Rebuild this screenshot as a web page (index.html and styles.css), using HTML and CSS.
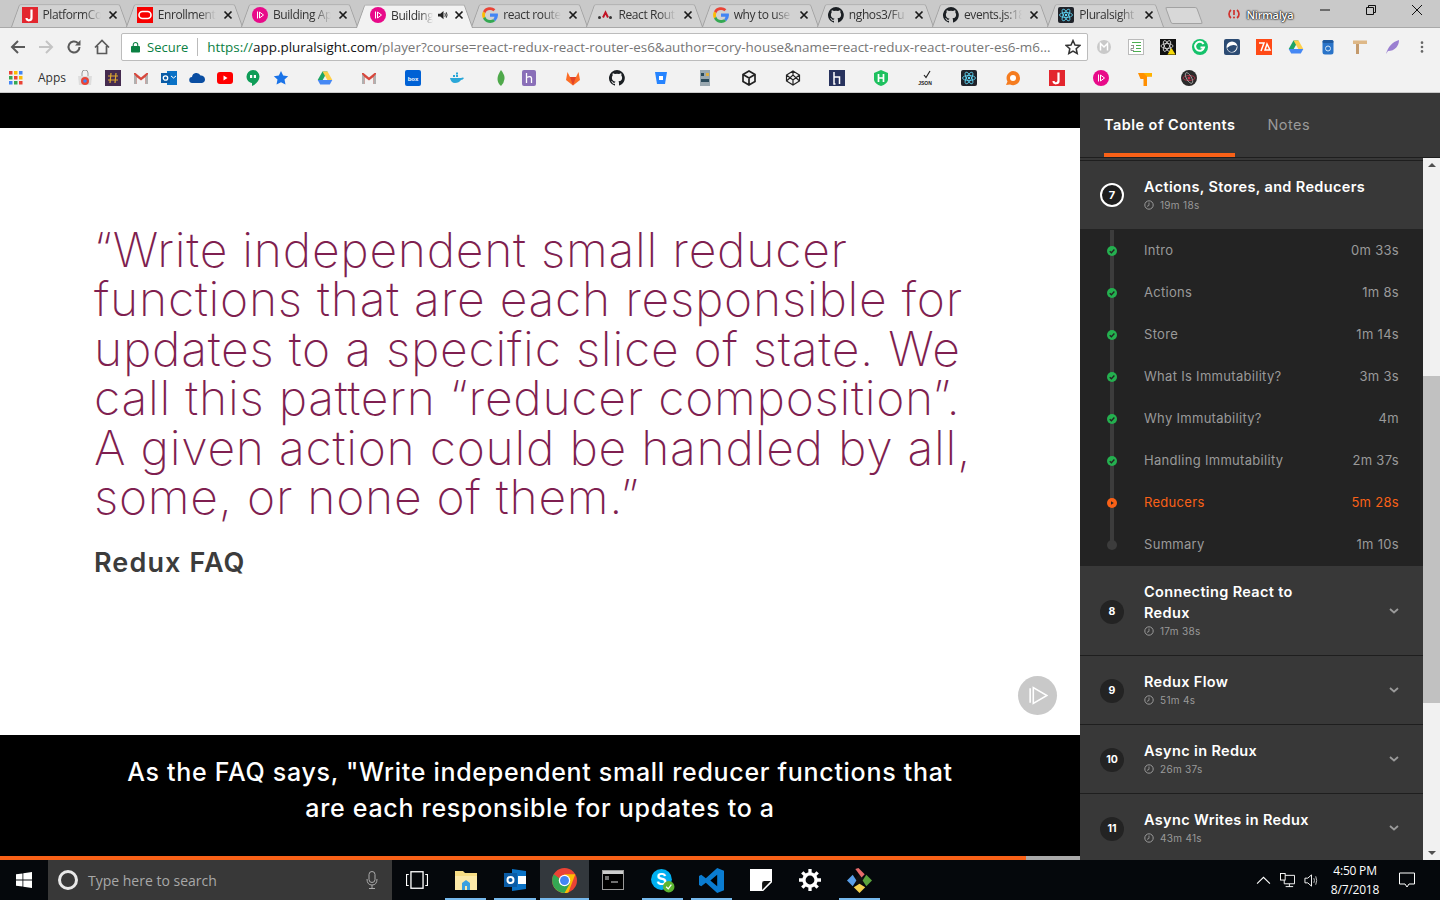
FILE: index.html
```html
<!DOCTYPE html>
<html lang="en">
<head>
  <meta charset="UTF-8">
  <title>Pluralsight</title>
  <link rel="stylesheet" href="styles.css">
</head>
<body>
  <svg class="defs" width="0" height="0">
    <symbol id="ps" viewBox="0 0 16 16"><circle cx="8" cy="8" r="8" fill="#e80a89"/><path d="M5.500 4.500v7M7.500 5v6l4-3z" fill="none" stroke="#fff" stroke-width="1"/></symbol>
    <symbol id="goog" viewBox="0 0 16 16"><path d="M8 3a5 5 0 0 1 3.400 1.300l2-2A8 8 0 0 0 1 4.400l2.300 1.800A5 5 0 0 1 8 3z" fill="#ea4335"/><path d="M3.300 6.200 1 4.400a8 8 0 0 0 0 7.200l2.300-1.800a5 5 0 0 1 0-3.600z" fill="#fbbc05"/><path d="M8 13a5 5 0 0 1-4.700-3.200L1 11.600A8 8 0 0 0 13.400 14l-2.200-1.800A5 5 0 0 1 8 13z" fill="#34a853"/><path d="M15.800 6.600H8v3.200h4.500a4 4 0 0 1-1.300 2.400l2.200 1.800a8 8 0 0 0 2.400-7.400z" fill="#4285f4"/></symbol>
    <symbol id="gh" viewBox="0 0 16 16"><path d="M8 0a8 8 0 0 0-2.500 15.600c.4.100.5-.2.500-.4v-1.400c-2.200.5-2.700-1-2.700-1-.4-.9-.9-1.200-.9-1.200-.7-.5.100-.5.100-.5.800.100 1.200.8 1.200.8.700 1.200 1.900.9 2.300.7.100-.5.300-.9.500-1.100-1.800-.2-3.600-.9-3.600-4 0-.9.300-1.600.8-2.100-.1-.2-.4-1 .1-2.100 0 0 .7-.2 2.200.8a7.600 7.600 0 0 1 4 0c1.500-1 2.200-.8 2.200-.8.400 1.100.2 1.900.1 2.100.5.600.8 1.300.8 2.100 0 3.100-1.900 3.700-3.700 3.900.3.300.6.800.6 1.500v2.200c0 .2.100.5.600.4A8 8 0 0 0 8 0z" fill="#1b1f23"/></symbol>
    <symbol id="react" viewBox="0 0 16 16"><rect width="16" height="16" rx="2" fill="#20232a"/><g fill="none" stroke="#61dafb" stroke-width=".8"><ellipse cx="8" cy="8" rx="6.500" ry="2.500"/><ellipse cx="8" cy="8" rx="6.500" ry="2.500" transform="rotate(60 8 8)"/><ellipse cx="8" cy="8" rx="6.500" ry="2.500" transform="rotate(120 8 8)"/></g><circle cx="8" cy="8" r="1.200" fill="#61dafb"/></symbol>
    <symbol id="jira" viewBox="0 0 16 16"><rect width="16" height="16" fill="#e3262e"/><path d="M9.500 2.500v8a2.500 2.500 0 0 1-5 .5" fill="none" stroke="#fff" stroke-width="2.200"/></symbol>
    <symbol id="gmail" viewBox="0 0 16 16"><path d="M1 3v11h2.500V7L8 10.500 12.500 7v7H15V3h-1.500L8 7.500 2.500 3z" fill="#d8473c"/><path d="M3.500 14V7L1 4v10zM12.500 14V7L15 4v10z" fill="#b0b0b0"/></symbol>
    <symbol id="drive" viewBox="0 0 16 16"><path d="M5.500 1.500h5L5.700 10H.7z" fill="#1fa463"/><path d="M10.500 1.500 15.300 10h-5L5.500 1.500z" fill="#ffd04b"/><path d="M.7 10h14.600l-2.500 4.500H3.200z" fill="#4688f4"/></symbol>
    <symbol id="close" viewBox="0 0 10 10"><path d="M1.500 1.500l7 7M8.500 1.500l-7 7" stroke="#1a1a1a" stroke-width="1.700"/></symbol>
    <symbol id="check" viewBox="0 0 10 10"><circle cx="5" cy="5" r="5" fill="#24b04f"/><path d="M2.700 5.200l1.700 1.600 3-3.300" fill="none" stroke="#232323" stroke-width="1.300"/></symbol>
    <symbol id="clock" viewBox="0 0 10 10"><circle cx="5" cy="5" r="4.200" fill="none" stroke="#9a9a9a" stroke-width="1"/><path d="M5 2.500V5.400L3 6.400" fill="none" stroke="#9a9a9a" stroke-width=".9"/></symbol>
    <symbol id="chev" viewBox="0 0 10 6"><path d="M1 1l4 3.500L9 1" fill="none" stroke="#9a9a9a" stroke-width="1.800"/></symbol>
  </svg>

  <header class="browser">
    <div class="tabstrip">
      <div class="tab"><svg class="fav"><use href="#jira"/></svg><span class="tab-title">PlatformCo</span><svg class="tab-x"><use href="#close"/></svg></div>
      <div class="tab"><svg class="fav" viewBox="0 0 16 16"><rect width="16" height="16" fill="#f80000"/><rect x="2" y="4.500" width="12" height="7" rx="3.500" fill="none" stroke="#fff" stroke-width="1.600"/></svg><span class="tab-title">Enrollment</span><svg class="tab-x"><use href="#close"/></svg></div>
      <div class="tab"><svg class="fav"><use href="#ps"/></svg><span class="tab-title">Building Ap</span><svg class="tab-x"><use href="#close"/></svg></div>
      <div class="tab active"><svg class="fav"><use href="#ps"/></svg><span class="tab-title short">Building</span><svg class="tab-sound" viewBox="0 0 12 10"><path d="M0 3.500h2.500L6 .5v9L2.500 6.500H0z" fill="#222"/><path d="M7.500 3q1 2 0 4M9 2q1.800 3 0 6" fill="none" stroke="#222"/></svg><svg class="tab-x"><use href="#close"/></svg></div>
      <div class="tab"><svg class="fav"><use href="#goog"/></svg><span class="tab-title">react route</span><svg class="tab-x"><use href="#close"/></svg></div>
      <div class="tab"><svg class="fav" viewBox="0 0 16 16"><circle cx="2.500" cy="10.500" r="1.500" fill="#333"/><path d="M6 10.500l2.500-5 2.500 5" fill="none" stroke="#c21325" stroke-width="2"/><circle cx="13.500" cy="10.500" r="1.500" fill="#333"/></svg><span class="tab-title">React Rout</span><svg class="tab-x"><use href="#close"/></svg></div>
      <div class="tab"><svg class="fav"><use href="#goog"/></svg><span class="tab-title">why to use</span><svg class="tab-x"><use href="#close"/></svg></div>
      <div class="tab"><svg class="fav"><use href="#gh"/></svg><span class="tab-title">nghos3/Fu</span><svg class="tab-x"><use href="#close"/></svg></div>
      <div class="tab"><svg class="fav"><use href="#gh"/></svg><span class="tab-title">events.js:18</span><svg class="tab-x"><use href="#close"/></svg></div>
      <div class="tab"><svg class="fav"><use href="#react"/></svg><span class="tab-title">Pluralsight</span><svg class="tab-x"><use href="#close"/></svg></div>
      <div class="newtab"></div>
      <div class="profile">
        <svg class="profile-ico" viewBox="0 0 12 12"><path d="M3 2a5 5 0 0 0 0 8M9 2a5 5 0 0 1 0 8" fill="none" stroke="#d0312d" stroke-width="1.700"/><path d="M6 2v5" stroke="#d0312d" stroke-width="1.700"/><circle cx="6" cy="9.500" r="1" fill="#d0312d"/></svg>
        <span class="profile-name">Nirmalya</span>
      </div>
      <div class="winbtns">
        <svg class="winbtn" viewBox="0 0 10 10"><path d="M0 5h10" stroke="#111"/></svg>
        <svg class="winbtn" viewBox="0 0 10 10"><path d="M.5 2.500h7v7h-7zM2.500 2.500v-2h7v7h-2" fill="none" stroke="#111"/></svg>
        <svg class="winbtn" viewBox="0 0 10 10"><path d="M0 0l10 10M10 0L0 10" stroke="#111"/></svg>
      </div>
    </div>

    <div class="toolbar">
      <div class="nav">
        <svg class="nav-btn" viewBox="0 0 16 16"><path d="M15 8H2M8 2L2 8l6 6" fill="none" stroke="#5a5a5a" stroke-width="2"/></svg>
        <svg class="nav-btn" viewBox="0 0 16 16"><path d="M1 8h13M8 2l6 6-6 6" fill="none" stroke="#c4c4c4" stroke-width="2"/></svg>
        <svg class="nav-btn" viewBox="0 0 16 16"><path d="M13.500 8a5.500 5.500 0 1 1-1.700-4" fill="none" stroke="#5a5a5a" stroke-width="2"/><path d="M14.500 1v5.500H9z" fill="#5a5a5a"/></svg>
        <svg class="nav-btn" viewBox="0 0 16 16"><path d="M1 8.500L8 1.500l7 7M3.500 7v7.500h9V7" fill="none" stroke="#5a5a5a" stroke-width="1.700"/></svg>
      </div>
      <div class="omnibox">
        <svg class="lock" viewBox="0 0 10 12"><path d="M2.500 5V3.500a2.500 2.500 0 0 1 5 0V5" fill="none" stroke="#0b8043" stroke-width="1.200"/><rect y="5" width="10" height="7" rx="1" fill="#0b8043"/></svg>
        <span class="secure">Secure</span>
        <span class="url"><span class="url-https">https://</span><span class="url-host">app.pluralsight.com</span>/player?course=react-redux-react-router-es6&amp;author=cory-house&amp;name=react-redux-react-router-es6-m6...</span>
        <svg class="star" viewBox="0 0 16 16"><path d="M8 1.500l2 4.500 4.800.5-3.600 3.200 1 4.800L8 12l-4.200 2.500 1-4.800L1.200 6.500 6 6z" fill="none" stroke="#333" stroke-width="1.500"/></svg>
      </div>
      <div class="exts">
        <svg class="ext" viewBox="0 0 16 16"><circle cx="8" cy="8" r="7" fill="#c9c9c9"/><path d="M4.500 11.500v-7L8 8l3.500-3.500v7" fill="none" stroke="#fff" stroke-width="1.500"/></svg>
        <svg class="ext" viewBox="0 0 16 16"><rect x=".5" y=".5" width="15" height="15" fill="#fff" stroke="#bbb"/><path d="M4 3.500h9M8 6.500h5M8 9.500h5M5 12.500h8" stroke="#4caf50"/><path d="M3 6.500h3M5.500 6.500v3H3v2h3" fill="none" stroke="#777" stroke-width=".8"/></svg>
        <svg class="ext" viewBox="0 0 16 16"><rect width="16" height="16" fill="#111"/><g fill="none" stroke="#ddd" stroke-width=".8"><ellipse cx="7" cy="7" rx="6" ry="2.500"/><ellipse cx="7" cy="7" rx="6" ry="2.500" transform="rotate(60 7 7)"/><ellipse cx="7" cy="7" rx="6" ry="2.500" transform="rotate(120 7 7)"/></g><path d="M11.500 9l4 6.500h-8z" fill="#f5d90a"/></svg>
        <svg class="ext" viewBox="0 0 16 16"><circle cx="8" cy="8" r="8" fill="#15c26b"/><path d="M11.500 5a4.500 4.500 0 1 0 .5 3.500H8.500" fill="none" stroke="#fff" stroke-width="2"/></svg>
        <svg class="ext" viewBox="0 0 16 16"><rect width="16" height="16" rx="2" fill="#2c4b73"/><circle cx="8" cy="8" r="5.500" fill="#fff"/><path d="M3 9q5-5 10-2-1 6-6 6-3-1-4-4z" fill="#2c4b73"/></svg>
        <svg class="ext" viewBox="0 0 16 16"><rect width="16" height="16" fill="#ff4a16"/><path d="M3 4h5L5 12M11 5l-2 6h5z" fill="none" stroke="#fff" stroke-width="1.500"/></svg>
        <svg class="ext"><use href="#drive"/></svg>
        <svg class="ext" viewBox="0 0 16 16"><rect x="2.500" y="1" width="11" height="14.500" rx="2.500" fill="#2a74c9"/><rect x="2.500" y="1" width="11" height="3" rx="1.500" fill="#1f5aa0"/><circle cx="8" cy="9.500" r="2.500" fill="none" stroke="#cfe3f7"/></svg>
        <svg class="ext" viewBox="0 0 16 16"><path d="M4 3h3v12H4z" fill="#c49a6c"/><path d="M1 1.500h14v3.500H1z" fill="#deb887"/></svg>
        <svg class="ext" viewBox="0 0 16 16"><path d="M2 15C4 8 8 3 15 1c0 6-4 11-11 11z" fill="#9a7fd1"/></svg>
        <svg class="ext-menu" viewBox="0 0 4 16"><circle cx="2" cy="3" r="1.500" fill="#666"/><circle cx="2" cy="8" r="1.500" fill="#666"/><circle cx="2" cy="13" r="1.500" fill="#666"/></svg>
      </div>
    </div>

    <div class="bookmarks">
      <svg class="bm" viewBox="0 0 16 16"><g fill="#ea4335"><rect x="1" y="1" width="3.500" height="3.500"/></g><rect x="6" y="1" width="3.500" height="3.500" fill="#fbbc05"/><rect x="11" y="1" width="3.500" height="3.500" fill="#4285f4"/><rect x="1" y="6" width="3.500" height="3.500" fill="#34a853"/><rect x="6" y="6" width="3.500" height="3.500" fill="#ea4335"/><rect x="11" y="6" width="3.500" height="3.500" fill="#fbbc05"/><rect x="1" y="11" width="3.500" height="3.500" fill="#4285f4"/><rect x="6" y="11" width="3.500" height="3.500" fill="#34a853"/><rect x="11" y="11" width="3.500" height="3.500" fill="#ea4335"/></svg>
      <span class="apps">Apps</span>
      <svg class="bm" viewBox="0 0 16 16"><path d="M1 6h14l-1 9H2z" fill="#ddd"/><circle cx="8" cy="11" r="4" fill="#ea4335"/><circle cx="8" cy="11" r="1.800" fill="#4285f4"/><path d="M5 6V3a3 3 0 0 1 6 0v3" fill="none" stroke="#999"/></svg>
      <svg class="bm" viewBox="0 0 16 16"><rect width="16" height="16" fill="#452b4f"/><path d="M6 3L5 13M11 3l-1 10M3 6h10M3 10h10" stroke="#e0a92f" stroke-width="1.200"/></svg>
      <svg class="bm"><use href="#gmail"/></svg>
      <svg class="bm" viewBox="0 0 16 16"><rect x="6" y="1" width="10" height="14" fill="#0a72c6"/><rect y="3" width="9" height="10" fill="#0a5ba5"/><circle cx="4.500" cy="8" r="2.200" fill="none" stroke="#fff" stroke-width="1.300"/><path d="M10 6l2.500 2L15 6" fill="none" stroke="#fff"/></svg>
      <svg class="bm" viewBox="0 0 16 16"><path d="M3.500 13a3 3 0 0 1-.5-6 4.500 4.500 0 0 1 8.500-1.500A4 4 0 0 1 16 9.500 3.500 3.500 0 0 1 13 13z" fill="#0a4ea2"/></svg>
      <svg class="bm" viewBox="0 0 16 16"><rect y="2" width="16" height="12" rx="3" fill="#f00"/><path d="M6.500 5.500v5l4-2.500z" fill="#fff"/></svg>
      <svg class="bm" viewBox="0 0 16 16"><path d="M8 0a6.500 6.500 0 0 0-6.500 6.500C1.500 10 4 12.500 7 13v3c4-2 7.500-5 7.500-9.500A6.500 6.500 0 0 0 8 0z" fill="#0f9d58"/><path d="M5 5h2.200v3H5zM8.800 5H11v3H8.800z" fill="#fff"/></svg>
      <svg class="bm" viewBox="0 0 16 16"><path d="M8 1l2.200 4.600 5 .6-3.700 3.400 1 5L8 12.200l-4.500 2.400 1-5L.8 6.200l5-.6z" fill="#1a73e8"/></svg>
      <svg class="bm wide"><use href="#drive"/></svg>
      <svg class="bm wide"><use href="#gmail"/></svg>
      <svg class="bm wide" viewBox="0 0 16 16"><rect width="16" height="16" rx="2" fill="#0061d5"/><text class="bm-text" x="8" y="11">box</text></svg>
      <svg class="bm wide" viewBox="0 0 16 16"><path d="M1 8h11q2-1 3 0-1 2-3 2-2 3-6 3-4 0-5-5z" fill="#2aa7d8"/><path d="M4 5h2v2H4zM7 5h2v2H7zM7 2.500h2v2H7z" fill="#2aa7d8"/></svg>
      <svg class="bm wide" viewBox="0 0 16 16"><path d="M8 0q4 5 3.500 9T8 16Q4.500 13 4.500 9T8 0z" fill="#4fa94b"/></svg>
      <svg class="bm" viewBox="0 0 16 16"><rect x="1" width="14" height="16" rx="2" fill="#8a6fb8"/><path d="M5.500 3v10M10.500 8v5M5.500 7.500q5-2 5 1" fill="none" stroke="#fff" stroke-width="1.300"/></svg>
      <svg class="bm wide" viewBox="0 0 16 16"><path d="M8 15.500L1 10l1.500-8L5 7h6l2.500-5L15 10z" fill="#fc6d26"/><path d="M8 15.500L5 7h6z" fill="#e24329"/></svg>
      <svg class="bm wide"><use href="#gh"/></svg>
      <svg class="bm wide" viewBox="0 0 16 16"><path d="M2 2h12l-2 12H4z" fill="#2684ff"/><rect x="6" y="6" width="4" height="4" fill="#fff"/></svg>
      <svg class="bm wide" viewBox="0 0 16 16"><rect x="3" width="10" height="16" fill="#9aa8b0"/><rect x="4" y="3" width="3" height="3" fill="#2b4a5a"/><rect x="9" y="3" width="3" height="3" fill="#e0b040"/><rect x="4" y="9" width="8" height="3" fill="#2b4a5a"/></svg>
      <svg class="bm wide" viewBox="0 0 16 16"><path d="M8 1l6 3.500v7L8 15l-6-3.500v-7zM2 4.500L8 8l6-3.500M8 8v7" fill="none" stroke="#222" stroke-width="1.700"/></svg>
      <svg class="bm wide" viewBox="0 0 16 16"><path d="M8 1l6.500 4v6L8 15l-6.500-4V5zM1.500 5L8 10l6.500-5M8 1v4M8 10v5M1.500 11L8 5l6.500 6" fill="none" stroke="#222" stroke-width="1.200"/></svg>
      <svg class="bm wide" viewBox="0 0 16 16"><rect width="16" height="16" fill="#28335e"/><path d="M5 2v12h1.500M5 7h5.500v7" fill="none" stroke="#fff" stroke-width="1.500"/></svg>
      <svg class="bm wide" viewBox="0 0 16 16"><path d="M8 0l7 3v7q-1 4-7 6-6-2-7-6V3z" fill="#1ec15f"/><path d="M5.500 4v8M10.500 4v8M5.500 8h5" stroke="#fff" stroke-width="1.700"/></svg>
      <svg class="bm wide" viewBox="0 0 16 16"><path d="M7 5l2 2.500L13 1" fill="none" stroke="#222" stroke-width="1.200"/><text class="bm-json" x="8" y="15">JSON</text></svg>
      <svg class="bm wide"><use href="#react"/></svg>
      <svg class="bm wide" viewBox="0 0 16 16"><path d="M8 1a7 7 0 0 1 7 7 7 7 0 0 1-10 6.500L1 15l1.500-3.500A7 7 0 0 1 8 1z" fill="#f57c20"/><circle cx="8" cy="8" r="3" fill="#fff"/></svg>
      <svg class="bm wide"><use href="#jira"/></svg>
      <svg class="bm wide"><use href="#ps"/></svg>
      <svg class="bm wide" viewBox="0 0 16 16"><path d="M1 3h14v3.500H10V16H6.500V9H3.500z" fill="#ff8f00"/><path d="M6.500 3H15v3.500H10z" fill="#ffb300"/></svg>
      <svg class="bm wide" viewBox="0 0 16 16"><circle cx="8" cy="8" r="8" fill="#2b2b2b"/><circle cx="8" cy="8" r="1.500" fill="#c2344a"/><ellipse cx="8" cy="8" rx="6" ry="2.500" fill="none" stroke="#c2344a" stroke-width=".8"/><ellipse cx="8" cy="8" rx="6" ry="2.500" fill="none" stroke="#aaa" stroke-width=".8" transform="rotate(60 8 8)"/></svg>
    </div>
  </header>

  <main class="app">
    <section class="player">
      <div class="player-top"></div>
      <div class="slide">
        <blockquote class="quote">“Write independent small reducer<br>functions that are each responsible for<br>updates to a specific slice of state. We<br>call this pattern “reducer composition”.<br>A given action could be handled by all,<br>some, or none of them.”</blockquote>
        <div class="quote-src">Redux FAQ</div>
        <div class="slide-play"><svg viewBox="0 0 20 20"><path d="M3 3v14M6 2.500v15L19 10z" fill="none" stroke="#fff" stroke-width="1.500"/></svg></div>
      </div>
      <div class="caption">As the FAQ says, "Write independent small reducer functions that<br>are each responsible for updates to a</div>
      <div class="progress"><div class="progress-fill"></div></div>
    </section>

    <aside class="sidebar">
      <nav class="side-tabs">
        <a class="side-tab current">Table of Contents</a>
        <a class="side-tab">Notes</a>
      </nav>
      <div class="side-body">
        <div class="toc">
          <div class="module open">
            <div class="num num-ring">7</div>
            <div class="module-info">
              <div class="module-title">Actions, Stores, and Reducers</div>
              <div class="module-time"><svg class="clock"><use href="#clock"/></svg>19m 18s</div>
            </div>
          </div>
          <ul class="clips">
            <li class="clip"><svg class="dot"><use href="#check"/></svg><span class="clip-name">Intro</span><span>0m 33s</span></li>
            <li class="clip"><svg class="dot"><use href="#check"/></svg><span class="clip-name">Actions</span><span>1m 8s</span></li>
            <li class="clip"><svg class="dot"><use href="#check"/></svg><span class="clip-name">Store</span><span>1m 14s</span></li>
            <li class="clip"><svg class="dot"><use href="#check"/></svg><span class="clip-name">What Is Immutability?</span><span>3m 3s</span></li>
            <li class="clip"><svg class="dot"><use href="#check"/></svg><span class="clip-name">Why Immutability?</span><span>4m</span></li>
            <li class="clip"><svg class="dot"><use href="#check"/></svg><span class="clip-name">Handling Immutability</span><span>2m 37s</span></li>
            <li class="clip playing"><svg class="dot" viewBox="0 0 10 10"><circle cx="5" cy="5" r="5" fill="#f96117"/><path d="M4 3.200v3.600L6.800 5z" fill="#232323"/></svg><span class="clip-name">Reducers</span><span>5m 28s</span></li>
            <li class="clip last"><svg class="dot" viewBox="0 0 10 10"><circle cx="5" cy="5" r="5" fill="#3c3c3c"/></svg><span class="clip-name">Summary</span><span>1m 10s</span></li>
          </ul>
          <div class="module">
            <div class="num">8</div>
            <div class="module-info">
              <div class="module-title">Connecting React to<br>Redux</div>
              <div class="module-time"><svg class="clock"><use href="#clock"/></svg>17m 38s</div>
            </div>
            <svg class="chev"><use href="#chev"/></svg>
          </div>
          <div class="module">
            <div class="num">9</div>
            <div class="module-info">
              <div class="module-title">Redux Flow</div>
              <div class="module-time"><svg class="clock"><use href="#clock"/></svg>51m 4s</div>
            </div>
            <svg class="chev"><use href="#chev"/></svg>
          </div>
          <div class="module">
            <div class="num">10</div>
            <div class="module-info">
              <div class="module-title">Async in Redux</div>
              <div class="module-time"><svg class="clock"><use href="#clock"/></svg>26m 37s</div>
            </div>
            <svg class="chev"><use href="#chev"/></svg>
          </div>
          <div class="module">
            <div class="num">11</div>
            <div class="module-info">
              <div class="module-title">Async Writes in Redux</div>
              <div class="module-time"><svg class="clock"><use href="#clock"/></svg>43m 41s</div>
            </div>
            <svg class="chev"><use href="#chev"/></svg>
          </div>
        </div>
        <div class="scrollbar">
          <div class="scroll-arrow up"></div>
          <div class="scroll-track"><div class="scroll-thumb"></div></div>
          <div class="scroll-arrow down"></div>
        </div>
      </div>
    </aside>
  </main>

  <footer class="taskbar">
    <div class="start"><svg viewBox="0 0 16 16"><path d="M0 2.300l6.500-.9v6.200H0zM7.300 1.300L16 0v7.600H7.300zM0 8.400h6.500v6.200L0 13.700zM7.300 8.400H16V16l-8.700-1.200z" fill="#fff"/></svg></div>
    <div class="search">
      <span class="cortana"></span>
      <span class="search-text">Type here to search</span>
      <svg class="mic" viewBox="0 0 12 18"><rect x="3" y=".5" width="6" height="11" rx="3" fill="none" stroke="#aaa"/><path d="M1 8q0 6 5 6t5-6M6 14v3M3 17.500h6" fill="none" stroke="#aaa"/></svg>
    </div>
    <div class="task"><svg viewBox="0 0 20 16"><rect x="4.500" y=".5" width="11" height="15" fill="none" stroke="#fff" stroke-width="1.200"/><path d="M2.500 3H.5v10h2M17.500 3h2v10h-2" fill="none" stroke="#fff"/></svg></div>
    <div class="task on"><svg viewBox="0 0 22 20"><path d="M0 1h8l2 2h12v17H0z" fill="#f7dd84"/><path d="M0 6h22v14H0z" fill="#fce9a8"/><path d="M7 20v-7l4-3 4 3v7h-3v-4h-2v4z" fill="#3aa0e0"/></svg></div>
    <div class="task on"><svg viewBox="0 0 22 22"><path d="M8 0l14 2v18L8 22z" fill="#0a72c6"/><path d="M0 4h13v14H0z" fill="#0a5ba5"/><circle cx="6.500" cy="11" r="3" fill="none" stroke="#fff" stroke-width="2"/><rect x="14" y="7" width="8" height="8" fill="#fff"/></svg></div>
    <div class="task on current big"><svg viewBox="0 0 24 24"><circle cx="12" cy="12" r="12" fill="#ea4335"/><path d="M12 12L1.700 18a12 12 0 0 0 14 5.400L22.400 6H12z" fill="#fbbc05"/><path d="M1.700 6A12 12 0 0 0 12 24l5.500-9.500H12L6 9z" fill="#34a853"/><circle cx="12" cy="12" r="5.500" fill="#fff"/><circle cx="12" cy="12" r="4.300" fill="#4285f4"/></svg></div>
    <div class="task"><svg viewBox="0 0 22 20"><rect x=".5" y=".5" width="21" height="19" fill="#000" stroke="#999"/><rect x="1" y="1" width="20" height="3" fill="#ccc"/><path d="M3 7h4M3 9h4M9 12h7" stroke="#ddd"/></svg></div>
    <div class="task on big"><svg viewBox="0 0 24 24"><circle cx="11" cy="11" r="10" fill="#00aff0"/><text class="skype-s" x="11" y="16">S</text><circle cx="18" cy="18" r="5.500" fill="#5cb531"/><path d="M15.500 18l2 2 3-4" fill="none" stroke="#fff" stroke-width="1.200"/></svg></div>
    <div class="task on big"><svg viewBox="0 0 22 22"><path d="M16 0l6 2.500v17L16 22 6 13 2 16 0 15V7l2-1 4 3z" fill="#0a7cd1"/><path d="M16 6l-6 5 6 5z" fill="#000"/></svg></div>
    <div class="task"><svg viewBox="0 0 20 20"><path d="M0 0h20v12l-8 8H0z" fill="#fff"/><path d="M11 19v-6q0-2 2-2h6z" fill="#111"/></svg></div>
    <div class="task"><svg viewBox="0 0 20 20"><circle cx="10" cy="10" r="5.500" fill="none" stroke="#fff" stroke-width="3"/><path d="M10 0v4M10 16v4M0 10h4M16 10h4M3 3l2.800 2.800M14.200 14.200L17 17M17 3l-2.800 2.800M5.800 14.200L3 17" stroke="#fff" stroke-width="3"/></svg></div>
    <div class="task on big"><svg viewBox="0 0 24 24"><path d="M12 6l6 6-6 6-6-6z" fill="#111"/><path d="M5.500 6.500L0 12l5.500 5.500L9 12z" fill="#5a9ee8"/><path d="M18.500 6.500L24 12l-5.500 5.500L15 12z" fill="#5ba33c"/><path d="M6.500 18.500L12 24l5.500-5.500L12 15z" fill="#f2d04f"/><path d="M8 1l3-1 6 6-3 3z" fill="#e56b6b"/></svg></div>
    <div class="tray">
      <svg class="tray-ico" viewBox="0 0 14 8"><path d="M1 7l6-6 6 6" fill="none" stroke="#fff"/></svg>
      <svg class="tray-ico" viewBox="0 0 16 16"><path d="M4.500 2.500h11v9h-11zM10 11.500v3M6 14.500h8" fill="none" stroke="#fff"/><rect x=".5" y=".5" width="5" height="7" fill="#000" stroke="#fff"/></svg>
      <svg class="tray-ico" viewBox="0 0 16 16"><path d="M1 5.500h3L8 2v12L4 10.500H1z" fill="none" stroke="#fff"/><path d="M10.500 5.500q1.200 2.500 0 5M12.500 3.500q2 4.500 0 9" fill="none" stroke="#ccc"/></svg>
      <div class="clock-box">4:50 PM<br>8/7/2018</div>
      <svg class="notify" viewBox="0 0 16 16"><path d="M.5 1h15v11H10l-2 3-2-3H.5z" fill="none" stroke="#fff"/></svg>
    </div>
  </footer>
</body>
</html>
```

FILE: styles.css
```css
* { box-sizing: border-box; }
html, body { margin: 0; height: 900px; overflow: hidden; }
body { font-family: Inter, "Open Sans", sans-serif; background: #000; }
.defs { position: absolute; }
svg { display: block; flex: none; }

/* browser chrome */
.browser { height: 93px; background: #f2f2f2; font-family: "Open Sans", sans-serif; }
.tabstrip { height: 28px; display: flex; align-items: stretch; background: #c9c9c9; padding-left: 10.500px; border-bottom: 1px solid #a9a9a9; }
.tab { position: relative; width: 115.200px; display: flex; align-items: center; padding: 2px 0 0 11px; z-index: 1; }
.tab::before { content: ""; position: absolute; top: 0; bottom: 0; left: 0; width: 115px; background: #d2d2d2; border: 1px solid #a2a2a2; border-bottom: 0; border-radius: 2px 2px 0 0; transform: perspective(40px) rotateX(14deg); transform-origin: bottom; z-index: -1; }
.tab.active::before { background: #f2f2f2; }
.tab.active { z-index: 2; margin-bottom: -1px; padding-left: 14px; }
.fav { width: 16px; height: 16px; margin-right: 5px; }
.tab-title { width: 58px; margin-right: 4px; font-size: 12px; letter-spacing: -.4px; color: #333; white-space: nowrap; overflow: hidden; -webkit-mask-image: linear-gradient(90deg, #000 70%, transparent); mask-image: linear-gradient(90deg, #000 70%, transparent); }
.tab-title.short { width: 42px; margin-right: 0; }
.tab-sound { width: 11px; height: 10px; margin: 0 2px 0 5px; }
.tab-x { width: 10px; height: 10px; margin-left: 3px; }
.newtab { width: 32px; height: 17px; margin: 7px 0 0 6px; background: #d8d8d8; border: 1px solid #a2a2a2; border-radius: 2px; transform: skewX(20deg); }
.profile { display: flex; align-items: center; margin-left: 28px; height: 28px; }
.profile-ico { width: 12px; height: 12px; margin-right: 6px; }
.profile-name { font-size: 11px; font-weight: 600; letter-spacing: -.2px; color: #fff; text-shadow: 0 0 2px #111, 0 0 2px #111, 0 0 1px #111; }
.winbtns { display: flex; margin-left: auto; align-items: center; gap: 36px; padding: 0 18px 8px 0; }
.winbtn { width: 10px; height: 10px; }

.toolbar { height: 35px; display: flex; align-items: center; padding-top: 2px; }
.nav { width: 121px; display: flex; align-items: center; gap: 12px; padding-left: 10px; }
.nav-btn { width: 16px; height: 16px; }
.omnibox { width: 967px; height: 28px; display: flex; align-items: center; background: #fff; border: 1px solid #bcbcbc; border-radius: 2px; padding: 0 6px 0 9px; font-size: 13.500px; white-space: nowrap; }
.lock { width: 9px; height: 12px; margin-right: 7px; }
.secure { color: #0b8043; padding-right: 9px; margin-right: 9px; border-right: 1px solid #bbb; line-height: 18px; font-size: 13px; }
.url { flex: 1; color: #767676; overflow: hidden; font-size: 13.430px; }
.url-https { color: #0b8043; }
.url-host { color: #111; }
.star { width: 16px; height: 16px; }
.exts { display: flex; align-items: center; gap: 16px; padding-left: 8px; }
.ext { width: 16px; height: 16px; }
.ext-menu { width: 4px; height: 14px; margin-left: 4px; }

.bookmarks { height: 30px; display: flex; align-items: center; gap: 12px; padding: 0 0 0 8px; border-bottom: 1px solid #c9c9c9; }
.bm { width: 16px; height: 16px; }
.bm.wide { margin-left: 16px; }
.apps { font-size: 12px; color: #333; margin: 0 0 0 2px; width: 27px; }
.bm-text { font: bold 6px "Liberation Sans", sans-serif; fill: #fff; text-anchor: middle; }
.bm-json { font: bold 5px "Liberation Sans", sans-serif; fill: #222; text-anchor: middle; }
.skype-s { font: bold 15px "Liberation Sans", sans-serif; fill: #fff; text-anchor: middle; }

/* player */
.app { height: 767px; display: flex; }
.player { width: 1080px; display: flex; flex-direction: column; background: #000; }
.player-top { height: 35px; }
.slide { position: relative; height: 607px; background: #fff; padding: 97px 0 0 94px; }
.quote { margin: 0; font-size: 48px; line-height: 49.400px; font-weight: 200; color: #7f1f50; letter-spacing: .75px; white-space: nowrap; }
.quote-src { margin-top: 25px; font-size: 27px; line-height: 34px; font-weight: 600; color: #3c3c3c; letter-spacing: 1.100px; }
.slide-play { position: absolute; left: 1018px; top: 548px; width: 39px; height: 39px; padding: 9px; border-radius: 50%; background: #c9c9c9; }
.caption { height: 121px; padding-top: 19px; color: #fff; font-size: 25px; line-height: 36px; font-weight: 500; text-align: center; letter-spacing: .7px; }
.progress { height: 4px; background: #a9a9a9; }
.progress-fill { width: 1026px; height: 4px; background: #f96117; }

/* table of contents */
.sidebar { width: 360px; display: flex; flex-direction: column; background: #383838; }
.side-tabs { height: 65px; display: flex; gap: 32px; padding-left: 24px; border-bottom: 1px solid #1e1e1e; flex: none; }
.side-tab { height: 64px; line-height: 63px; font-size: 14.500px; letter-spacing: .45px; color: #9a9a9a; }
.side-tab.current { color: #fff; font-weight: 600; border-bottom: 4px solid #f96117; }
.side-body { flex: 1; display: flex; min-height: 0; }
.toc { width: 343px; padding-top: 2px; background: #383838; overflow: hidden; }
.module { display: flex; align-items: center; padding: 15px 24px 17px 20px; border-bottom: 1px solid #1e1e1e; }
.module.open { height: 70px; padding: 0 24px 2px 20px; border-top: 1px solid #1e1e1e; border-bottom: 1px solid #232323; }
.num { width: 24px; height: 24px; margin-top: 4px; border-radius: 50%; background: #232323; color: #fff; font-size: 10.500px; font-weight: 700; text-align: center; line-height: 24px; flex: none; }
.num-ring { margin-top: 2px; background: #1e1e1e; border: 2px solid #fff; line-height: 20px; font-size: 11px; }
.module-info { flex: 1; margin-left: 20px; }
.module-title { color: #fff; font-size: 14.500px; line-height: 21px; font-weight: 600; letter-spacing: .35px; }
.module-time { display: flex; align-items: center; margin-top: 1px; color: #9a9a9a; font-size: 10px; letter-spacing: .3px; line-height: 14px; }
.clock { width: 10px; height: 10px; margin-right: 6px; }
.chev { width: 10px; height: 6px; margin-top: 2px; }
.clips { margin: 0; padding: 0; list-style: none; background: #232323; }
.clip { position: relative; height: 42px; display: flex; align-items: center; justify-content: space-between; padding: 0 24px 2px 64px; color: #9a9a9a; font-size: 13px; letter-spacing: .3px; }
.clip::before { content: ""; position: absolute; left: 30px; top: 0; bottom: 0; width: 4px; background: #3c3c3c; }
.clip.last::before { bottom: 21px; }
.dot { position: absolute; left: 27px; top: 16px; width: 10px; height: 10px; }
.clip.playing { color: #f96117; }
.scrollbar { flex: 1; display: flex; flex-direction: column; background: #f1f1f1; }
.scroll-arrow { height: 14px; flex: none; position: relative; }
.scroll-arrow::after { content: ""; position: absolute; left: 5px; top: 5px; border: 4px solid transparent; border-top: 0; border-bottom: 4px solid #505050; }
.scroll-arrow.down::after { border-bottom: 0; border-top: 4px solid #505050; }
.scroll-track { flex: 1; padding-top: 204px; }
.scroll-thumb { height: 327px; background: #c1c1c1; }

/* taskbar */
.taskbar { height: 40px; display: flex; align-items: center; background: #05080c; }
.start { width: 48px; height: 40px; display: flex; align-items: center; justify-content: center; }
.start svg { width: 16px; height: 16px; }
.search { width: 344px; height: 40px; display: flex; align-items: center; background: #383838; padding: 0 14px 0 10px; }
.cortana { width: 20px; height: 20px; border-radius: 50%; border: 3px solid #e8e8e8; margin-right: 10px; flex: none; }
.search-text { flex: 1; color: #a8a8a8; font: 14px "Open Sans", sans-serif; }
.mic { width: 12px; height: 18px; }
.task { width: 49.200px; height: 40px; display: flex; align-items: center; justify-content: center; position: relative; }
.task svg { width: 22px; height: 22px; }
.task.big svg { width: 25px; height: 25px; }
.task.on::after { content: ""; position: absolute; left: 0; right: 0; bottom: 0; height: 2px; background: #76b9ed; margin: 0 4px; }
.task.current { background: #33383d; }
.task.current::after { margin: 0; }
.tray { margin-left: auto; display: flex; align-items: center; height: 40px; gap: 9px; padding-right: 25px; }
.tray-ico { width: 15px; height: 15px; }
.clock-box { color: #fff; font: 12px/19px "Open Sans", sans-serif; letter-spacing: -.2px; text-align: center; width: 60px; margin-left: -3px; }
.notify { width: 16px; height: 16px; margin-left: 5px; }
```
